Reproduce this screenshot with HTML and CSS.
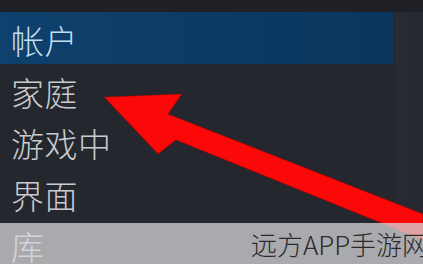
FILE: index.html
```html
<!DOCTYPE html>
<html lang="zh">
<head>
<meta charset="utf-8">
<link rel="stylesheet" href="styles.css">
</head>
<body>
<div class="screen">
  <div class="menu">
    <div class="item active">帐户</div>
    <div class="item">家庭</div>
    <div class="item">游戏中</div>
    <div class="item">界面</div>
    <div class="item">库</div>
  </div>
  <svg class="arrow" width="423" height="264" viewBox="0 0 423 264">
    <polygon points="104,97 182,94 168,114 423,214 423,240 176,140 158,154" fill="#fb0808" stroke="#8a0a0a" stroke-opacity="0.5" stroke-width="1.2" stroke-linejoin="round"/>
  </svg>
  <div class="watermark"><span class="wm-text">远方APP手游网</span></div>
</div>
</body>
</html>
```
FILE: styles.css
```css
html, body {
  margin: 0;
  padding: 0;
}
body {
  width: 423px;
  height: 264px;
  overflow: hidden;
  background: #24272d;
  font-family: "Noto Sans CJK SC", "Noto Sans", sans-serif;
}
.screen {
  position: relative;
  width: 423px;
  height: 264px;
  overflow: hidden;
  background: linear-gradient(to right, #24272d 0, #24272d 394px, #282b31 396px, #25282e 100%);
}
.menu {
  padding-top: 12px;
  background: linear-gradient(to bottom, #1f2126 0, #1f2126 12px, transparent 12px);
  display: flex;
  flex-direction: column;
}
.item {
  height: 51.5px;
  box-sizing: border-box;
  padding: 5px 0 0 11px;
  line-height: 46.5px;
  font-size: 33px;
  font-weight: 300;
  letter-spacing: 0.5px;
  color: #c9cbce;
  white-space: nowrap;
}
.item.active {
  width: 393px;
  background: linear-gradient(to right, #0f416e 0, #0c3a64 60%, #0b365e 100%);
  color: #c3def2;
}
.arrow {
  position: absolute;
  left: 0;
  top: 0;
}
.watermark {
  position: absolute;
  left: 0;
  top: 223px;
  width: 423px;
  height: 41px;
  background: rgba(215, 215, 217, 0.75);
  display: flex;
  align-items: center;
  box-sizing: border-box;
  padding-left: 251px;
  white-space: nowrap;
}
.wm-text {
  font-size: 26px;
  font-weight: 300;
  color: #2a2a2c;
  line-height: 1;
}
```
